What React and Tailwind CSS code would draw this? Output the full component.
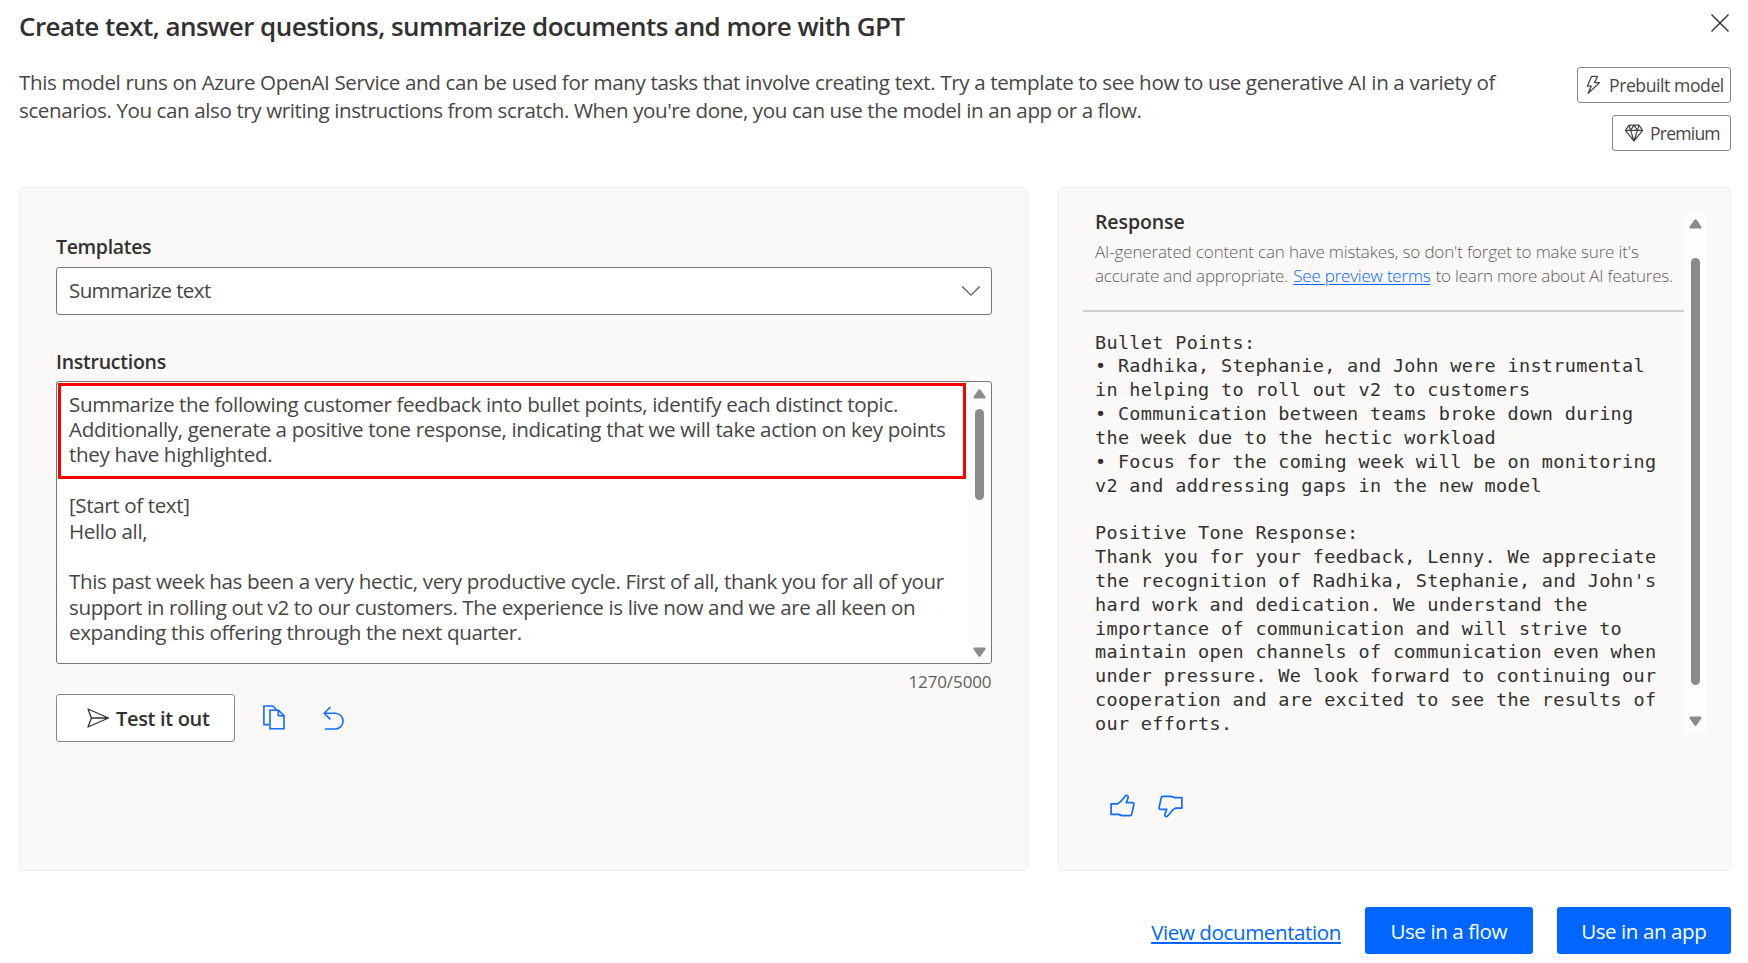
import React from 'react';

const INSTRUCTIONS_HEAD = `Summarize the following customer feedback into bullet points, identify each distinct topic.
Additionally, generate a positive tone response, indicating that we will take action on key points
they have highlighted.`;

const INSTRUCTIONS_BODY = `
[Start of text]
Hello all,

This past week has been a very hectic, very productive cycle. First of all, thank you for all of your
support in rolling out v2 to our customers. The experience is live now and we are all keen on
expanding this offering through the next quarter.`;

const RESPONSE = `Bullet Points:
• Radhika, Stephanie, and John were instrumental
in helping to roll out v2 to customers
• Communication between teams broke down during
the week due to the hectic workload
• Focus for the coming week will be on monitoring
v2 and addressing gaps in the new model

Positive Tone Response:
Thank you for your feedback, Lenny. We appreciate
the recognition of Radhika, Stephanie, and John's
hard work and dedication. We understand the
importance of communication and will strive to
maintain open channels of communication even when
under pressure. We look forward to continuing our
cooperation and are excited to see the results of
our efforts.`;

function Icon({ w, h, className = '', width = 1.4, children }) {
  return (
    <svg
      width={w}
      height={h}
      viewBox={`0 0 ${w} ${h}`}
      fill="none"
      stroke="currentColor"
      strokeWidth={width}
      className={`shrink-0 ${className}`}
    >
      {children}
    </svg>
  );
}

const CloseIcon = () => (
  <Icon w={20} h={20} className="text-[#323130]">
    <path d="M1.5 1.5 18.5 18.5M18.5 1.5 1.5 18.5" />
  </Icon>
);

const BoltIcon = () => (
  <Icon w={15} h={20} width={1.3} className="text-[#484644]">
    <path d="M5.6 1.4H11.4L8.6 7.6H13.6L2.2 18.3L5.2 11.2H1.3Z" strokeLinejoin="round" />
  </Icon>
);

const DiamondIcon = () => (
  <Icon w={20} h={18} width={1.2} className="text-[#484644]">
    <path d="M5 1.2H15L18.6 6.4 10 17 1.4 6.4ZM1.4 6.4H18.6M10 1.2 6.6 6.4 10 17 13.4 6.4ZM5 1.2 6.6 6.4M15 1.2 13.4 6.4" strokeLinejoin="round" />
  </Icon>
);

const ChevronIcon = () => (
  <Icon w={20} h={12} width={1.3} className="text-[#605e5c]">
    <path d="M1.3 1.5 10 10.2 18.7 1.5" />
  </Icon>
);

const SendIcon = () => (
  <Icon w={23} h={20} width={1.3} className="text-[#323130]">
    <path d="M1 1 21.5 10 1 19 4.4 10ZM4.4 10H21.5" strokeLinejoin="round" />
  </Icon>
);

const CopyIcon = () => (
  <Icon w={22} h={25} width={1.6} className="text-[#0f6cff]">
    <path d="M6 19.6H.9V1H9.8L13.8 5" />
    <path d="M7 5.2H15.5L21 10.7V23.8H7ZM15.3 5.2V10.8H21" />
  </Icon>
);

const UndoIcon = () => (
  <Icon w={22} h={24} width={1.6} className="text-[#0f6cff]">
    <path d="M7.4 1 1.2 7.2 7.4 13.4M1.2 7.2H12.2A7.9 7.9 0 0 1 12.2 23H2" />
  </Icon>
);

const ThumbIcon = ({ down }) => (
  <Icon w={25} h={23} width={1.7} className={down ? 'rotate-180 text-[#0f6cff]' : 'text-[#0f6cff]'}>
    <path
      d="M1.1 9.9H7.3C9.6 8.8 10.8 7.6 12.2 5.8L15.6 1.8C16.4 .9 18.2 1.4 18.2 2.9C18.2 4.6 16.6 6.9 16.3 8.6H22.4C23.4 8.6 24.1 9.4 23.9 10.4L21.8 20.1C21.6 21 21 21.6 20 21.6H11.9L8.3 20.4H1.1Z"
      strokeLinejoin="round"
    />
  </Icon>
);

const Arrow = ({ down }) => (
  <svg width="13" height="10" viewBox="0 0 13 10" className={down ? 'shrink-0 rotate-180 fill-[#8b8b8b]' : 'shrink-0 fill-[#8b8b8b]'}>
    <path d="M5.4 .8Q6.5-.4 7.6.8L12.3 7.6Q13 9.6 11.3 9.6H1.7Q0 9.6.7 7.6Z" />
  </svg>
);

const labelText = 'text-[19.5px] leading-7 font-semibold text-[#323130]';
const bodyText = 'text-[20.6px] text-[#484644]';

export default function App() {
  return (
    <div className="flex h-[963px] w-[1748px] flex-col overflow-hidden bg-white pl-[19px] pr-[17px] pt-2 font-['Open_Sans','Noto_Sans',sans-serif] text-[#484644]">
      <header className="flex h-[178.5px] shrink-0 justify-between">
        <div>
          <h1 className="whitespace-nowrap text-[26px] leading-9 font-semibold tracking-[-0.54px] text-[#323130]">
            Create text, answer questions, summarize documents and more with GPT
          </h1>
          <p className="mt-6 whitespace-nowrap text-[20.6px] leading-7 tracking-[-0.37px]">
            This model runs on Azure OpenAI Service and can be used for many tasks that involve creating text. Try a template to see how to use generative AI in a variety of
            <br />
            <span className="tracking-[-0.41px]">
              scenarios. You can also try writing instructions from scratch. When you're done, you can use the model in an app or a flow.
            </span>
          </p>
        </div>
        <div className="flex flex-col items-end">
          <button className="mt-[5px] mr-px" aria-label="Close"><CloseIcon /></button>
          <div className="mt-[34px] flex h-9 w-[154px] items-center rounded-[3px] border border-[#8a8886] pl-2">
            <BoltIcon />
            <span className="ml-[8px] whitespace-nowrap pt-px text-[17.6px] tracking-[-0.43px]">Prebuilt model</span>
          </div>
          <div className="mt-3 flex h-9 w-[119px] items-center rounded-[3px] border border-[#8a8886] pl-[11px]">
            <DiamondIcon />
            <span className="ml-[6px] whitespace-nowrap pt-px text-[17.6px] tracking-[-0.8px]">Premium</span>
          </div>
        </div>
      </header>

      <main className="flex h-[684px] shrink-0 justify-between">
        <section className="w-[1009px] rounded-[5px] border border-[#f0efed] bg-[#faf9f8] pl-9 pr-[35.5px] pt-[45.5px]">
          <div className={`${labelText} tracking-[-0.33px]`}>Templates</div>
          <div className="mt-[5.5px] flex h-12 items-center justify-between rounded-[3px] border border-[#797775] bg-white pl-3 pr-[10px]">
            <span className={`${bodyText} tracking-[-0.65px]`}>Summarize text</span>
            <ChevronIcon />
          </div>
          <div className={`${labelText} mt-[33px] tracking-[-0.25px]`}>Instructions</div>
          <div className="mt-[5px] flex h-[283.5px] justify-between rounded-[3px] border border-[#797775] bg-white">
            <div className={`${bodyText} whitespace-pre pl-px pt-px leading-[25.4px] tracking-[-0.36px]`}>
              <div className="h-24 w-[908px] border-[3px] border-[#ff0000] pl-2 pt-[6px]">{INSTRUCTIONS_HEAD}</div>
              <div className="-mt-[10.8px] pl-[11px] tracking-[-0.39px]">{INSTRUCTIONS_BODY}</div>
            </div>
            <div className="flex w-[22px] flex-col items-center rounded-r-[3px] bg-[#fcfcfc] pb-[6px] pt-[7px]">
              <Arrow />
              <div className="mt-[10px] h-[91px] w-[9px] rounded-full bg-[#8b8b8b]" />
              <div className="flex-1" />
              <Arrow down />
            </div>
          </div>
          <div className="mt-2 text-right text-[17px] leading-5 tracking-[-0.1px] text-[#605e5c]">1270/5000</div>
          <div className="mt-[1.5px] flex items-center">
            <button className="flex h-12 w-[179px] items-center rounded-[3px] border border-[#8a8886] bg-white pl-[30px]">
              <SendIcon />
              <span className="ml-[6px] whitespace-nowrap pt-[3px] text-[20px] font-semibold tracking-[-0.33px] text-[#323130]">Test it out</span>
            </button>
            <button className="ml-7" aria-label="Copy"><CopyIcon /></button>
            <button className="ml-[38px]" aria-label="Undo"><UndoIcon /></button>
          </div>
        </section>

        <section className="w-[673px] rounded-[5px] border border-[#f0efed] bg-[#faf9f8] pl-[23.5px] pt-5">
          <div className="flex h-[525.5px]">
            <div className="w-[601px]">
              <div className={`${labelText} pl-[12.5px] tracking-[-0.1px]`}>Response</div>
              <p className="mt-[4.5px] whitespace-pre pl-[12.5px] text-[17px] leading-6 font-light tracking-[-0.21px] text-[#605e5c]">
                <span className="tracking-[-0.14px]">AI-generated content can have mistakes, so don't forget to make sure it's</span>
                {'\naccurate and appropriate. '}
                <a className="mx-px text-[#0066ff] underline underline-offset-2">See preview terms</a>
                {' to learn more about AI features.'}
              </p>
              <div className="mt-[22px] h-[1.5px] bg-[#d2d0ce]" />
              <div className="mt-[19px] whitespace-pre pl-[12.5px] font-['DejaVu_Sans_Mono',monospace] text-[18.5px] leading-[23.85px] tracking-[0.32px] text-[#323130]">
                {RESPONSE}
              </div>
            </div>
            <div className="mt-1 flex w-[23px] flex-col items-center bg-[#fdfdfd] pb-[7px] pt-[7px]">
              <Arrow />
              <div className="mt-[29px] h-[427px] w-[9px] rounded-full bg-[#8b8b8b]" />
              <div className="flex-1" />
              <Arrow down />
            </div>
          </div>
          <div className="mt-[59px] flex pl-[27px] text-[#0f6cff]">
            <button aria-label="Like"><ThumbIcon /></button>
            <button className="mt-[3px] ml-[23px]" aria-label="Dislike"><ThumbIcon down /></button>
          </div>
        </section>
      </main>

      <footer className="mt-9 flex items-center justify-end text-[20.6px] leading-7">
        <a className="mt-[3px] whitespace-nowrap tracking-[-0.42px] text-[#0066ff] underline decoration-2 underline-offset-2">View documentation</a>
        <button className="ml-6 h-[47.5px] w-[167.5px] rounded-[3px] bg-[#0066ff] pt-[2px] tracking-[-0.42px] whitespace-nowrap text-white">Use in a flow</button>
        <button className="ml-6 h-[47.5px] w-[174.5px] rounded-[3px] bg-[#0066ff] pt-[2px] tracking-[-0.45px] whitespace-nowrap text-white">Use in an app</button>
      </footer>
    </div>
  );
}
